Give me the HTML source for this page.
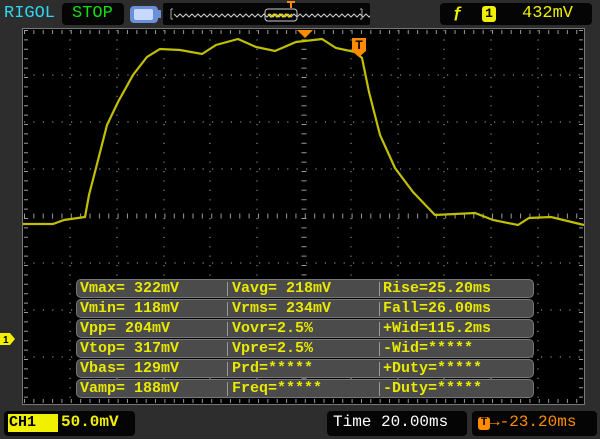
<!DOCTYPE html>
<html><head><style>
*{margin:0;padding:0;box-sizing:border-box}
body{width:600px;height:439px;background:#2d2d2d;position:relative;overflow:hidden;font-family:"Liberation Mono",monospace;font-weight:bold}
.a{position:absolute}
.box{position:absolute;background:#050505;border-radius:4px}
.row{position:absolute;left:76px;width:458px;height:19px;background:#4b4b4b;border:1px solid #777;border-radius:5px;color:#e8e800;font-size:15px;line-height:17px}
.row span{position:absolute;top:0}
.row i{position:absolute;top:2px;width:1px;height:14px;background:#999}
</style></head><body>
<div class="a" style="left:4px;top:4px;color:#2fd8f0;font-size:17px;font-weight:normal">RIGOL</div>
<div class="box" style="left:62px;top:3px;width:62px;height:22px"></div>
<div class="a" style="left:72px;top:4px;color:#10e010;font-size:17px;font-weight:normal">STOP</div>
<div class="a" style="left:130px;top:6px;width:28px;height:17px;background:#6a8ed8;border-radius:4px"></div>
<div class="a" style="left:134px;top:9px;width:19px;height:11px;background:#c8d8ff;border-radius:2px"></div>
<div class="a" style="left:158px;top:10px;width:3px;height:8px;background:#6a8ed8"></div>
<div class="box" style="left:163px;top:3px;width:207px;height:22px;border-radius:2px"></div>
<svg class="a" style="left:163px;top:0" width="207" height="28">
<path d="M8 9v10M8 9h2M8 19h2M199 9v10M199 9h-2M199 19h-2" stroke="#aaa" fill="none"/>
<path d="M11 14 l3 3 l3 -3 l3 3 l3 -3 l3 3 l3 -3 l3 3 l3 -3 l3 3 l3 -3 l3 3 l3 -3 l3 3 l3 -3 l3 3 l3 -3 l3 3 l3 -3 l3 3 l3 -3 l3 3 l3 -3 l3 3 l3 -3 l3 3 l3 -3 l3 3 l3 -3 l3 3 l3 -3 l3 3 l3 -3 l3 3 l3 -3 l3 3 l3 -3 l3 3 l3 -3 l3 3 l3 -3 l3 3 l3 -3 l3 3 l3 -3 l3 3 l3 -3 l3 3 l3 -3 l3 3 l3 -3 l3 3 l3 -3 l3 3 l3 -3 l3 3 l3 -3 l3 3 l3 -3 l3 3 l3 -3 l3 3 l3 -3 l3 3 l3 -3 l3 3 l3 -3 l3 3 l3 -3 l3 3 l3 -3 l3 3 l3 -3 l3 3 l3 -3 l3 3" stroke="#ccc" fill="none"/>
<rect x="102" y="9" width="32" height="12" rx="3" fill="none" stroke="#ccc"/>
<path d="M105 14 l3 3 l3 -3 l3 3 l3 -3 l3 3 l3 -3 l3 3 l3 -3" stroke="#e8d800" fill="none" stroke-width="1.5"/>
<path d="M124 2h8M128 2v6" stroke="#ff8c00" stroke-width="2"/>
</svg>
<div class="box" style="left:440px;top:3px;width:152px;height:22px"></div>
<div class="a" style="left:453px;top:4px;color:#f0f000;font-size:16px">ƒ</div>
<div class="a" style="left:482px;top:6px;width:14px;height:16px;background:#f0f000;border-radius:3px;color:#000;font-size:13px;text-align:center;line-height:16px">1</div>
<div class="a" style="left:522px;top:4px;color:#f0f000;font-size:17px;font-weight:normal">432mV</div>

<svg class="a" style="left:0;top:0" width="600" height="439">
<rect x="22.5" y="28.5" width="562" height="376" fill="#000" stroke="#777"/>
<g stroke="#888" stroke-width="1.2" stroke-dasharray="1.2 8.2">
<path d="M70 30V404M117 30V404M164 30V404M210 30V404M257 30V404M351 30V404M398 30V404M444 30V404M491 30V404M538 30V404"/>
<path d="M24 75H584M24 122H584M24 169H584M24 263H584M24 310H584M24 357H584"/>
</g>
<g stroke="#999" stroke-dasharray="1 8.36">
<path d="M24 216H584" stroke-width="5"/>
<path d="M24 32H584M24 401H584" stroke-width="4"/>
<path d="M304 30V404" stroke-width="5" stroke-dasharray="1 8.4"/>
<path d="M26 30V404M581 30V404" stroke-width="4" stroke-dasharray="1 8.4"/>
</g>
<path d="M23 224L53 224L64 220L85 217L89 195L96 168L107 125L118 102L133 75L147 57L160 49L180 50L202 54L216 45L238 39L256 47L275 51L296 42L322 39L336 48L355 52L362 58L369 92L380 135L395 168L413 192L435 215L475 213L493 220L518 225L529 218L551 217L584 225" stroke="#c0c000" stroke-width="2.2" fill="none"/>
<path d="M297 30h16l-8 8z" fill="#ff8c00"/>
<path d="M352 38h14v13l-7 6l-7-6z" fill="#ff8c00"/>
<text x="359" y="49" fill="#000" font-size="12" text-anchor="middle" font-family="Liberation Sans" font-weight="bold">T</text>
<path d="M0 333h10l5 6l-5 6h-10z" fill="#f0f000"/>
<text x="3" y="343" fill="#000" font-size="10" font-family="Liberation Sans" font-weight="bold">1</text>
</svg>

<div class="row" style="top:279px"><span style="left:3px">Vmax= 322mV</span><i style="left:150px"></i><span style="left:155px">Vavg= 218mV</span><i style="left:302px"></i><span style="left:306px">Rise=25.20ms</span></div>
<div class="row" style="top:299px"><span style="left:3px">Vmin= 118mV</span><i style="left:150px"></i><span style="left:155px">Vrms= 234mV</span><i style="left:302px"></i><span style="left:306px">Fall=26.00ms</span></div>
<div class="row" style="top:319px"><span style="left:3px">Vpp= 204mV</span><i style="left:150px"></i><span style="left:155px">Vovr=2.5%</span><i style="left:302px"></i><span style="left:306px">+Wid=115.2ms</span></div>
<div class="row" style="top:339px"><span style="left:3px">Vtop= 317mV</span><i style="left:150px"></i><span style="left:155px">Vpre=2.5%</span><i style="left:302px"></i><span style="left:306px">-Wid=*****</span></div>
<div class="row" style="top:359px"><span style="left:3px">Vbas= 129mV</span><i style="left:150px"></i><span style="left:155px">Prd=*****</span><i style="left:302px"></i><span style="left:306px">+Duty=*****</span></div>
<div class="row" style="top:379px"><span style="left:3px">Vamp= 188mV</span><i style="left:150px"></i><span style="left:155px">Freq=*****</span><i style="left:302px"></i><span style="left:306px">-Duty=*****</span></div>

<div class="box" style="left:4px;top:411px;width:131px;height:25px"></div>
<div class="a" style="left:8px;top:414px;width:50px;height:18px;background:#f0f000;color:#000;font-size:15px;line-height:18px;padding-left:1px">CH1</div>
<div class="a" style="left:61px;top:413px;color:#f0f000;font-size:16px">50.0mV</div>
<div class="box" style="left:327px;top:411px;width:140px;height:25px"></div>
<div class="a" style="left:333px;top:413px;color:#fff;font-size:16px;font-weight:normal">Time 20.00ms</div>
<div class="box" style="left:472px;top:411px;width:125px;height:25px"></div>
<div class="a" style="left:478px;top:417px;width:12px;height:13px;background:#ff8c00;border-radius:3px;color:#000;font-size:11px;text-align:center;line-height:13px">T</div>
<div class="a" style="left:490px;top:413px;color:#ff8c00;font-size:16px;font-weight:normal">→-23.20ms</div>
</body></html>
